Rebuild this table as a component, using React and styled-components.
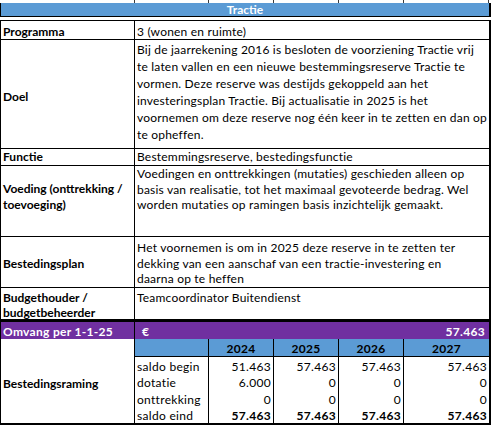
import React from "react";
import styled, { createGlobalStyle } from "styled-components";

const BLUE = "#5b9bd5";
const PURPLE = "#7030a0";
const COLS = "134px 74px 65px 65px 65px 85px";

const GlobalStyle = createGlobalStyle`
  *, *::before, *::after { box-sizing: border-box; }
  html, body { margin: 0; padding: 0; background: #fff; }
  body {
    font-family: Lato, "Liberation Sans", sans-serif;
    font-size: 12px;
    color: #000;
  }
`;

const Sheet = styled.div`
  width: 491px;
`;

const TopStrip = styled.div`
  display: grid;
  grid-template-columns: ${COLS};
  height: 3px;
  padding-left: 1px;
`;

const StripCell = styled.div`
  border-right: 1px solid #3a3a3a;
`;

const Title = styled.div`
  height: 14px;
  line-height: 13px;
  background: ${BLUE};
  color: #fff;
  font-weight: 700;
  text-align: center;
  border-bottom: 1px solid #000;
  border-left: 1px solid #000;
  border-right: 2px solid #000;
  margin-bottom: 3px;
`;

const Body = styled.div`
  border: 1px solid #000;
  border-right-width: 2px;
  border-bottom-width: 2px;
`;

const InfoRow = styled.div`
  display: grid;
  grid-template-columns: 134px 1fr;
  height: ${(p) => p.$h}px;
  line-height: ${(p) => p.$lh}px;
  border-bottom: ${(p) => (p.$thick ? 3 : 1)}px solid #000;
`;

const Label = styled.div`
  padding: ${(p) => p.$pad}px 2px 0;
  border-right: 1px solid #000;
  font-weight: 700;
  white-space: pre;
  overflow: hidden;
`;

const Value = styled.div`
  padding: ${(p) => p.$pad}px 2px 0;
  white-space: pre;
  overflow: hidden;
  letter-spacing: 0.2px;
`;

const TotalRow = styled.div`
  display: grid;
  grid-template-columns: 134px 1fr;
  height: 17px;
  line-height: 15px;
  background: ${PURPLE};
  color: #fff;
  font-weight: 700;
`;

const TotalLabel = styled.div`
  padding: 2px 2px 0;
  border-right: 1px solid #000;
  letter-spacing: 0.3px;
`;

const TotalValue = styled.div`
  display: flex;
  justify-content: space-between;
  padding: 2px 4px 0 7px;
  letter-spacing: 0.3px;
`;

const Raming = styled.div`
  display: grid;
  grid-template-columns: ${COLS};
  grid-template-rows: 18px repeat(4, 16.5px);
`;

const RamingLabel = styled.div`
  grid-row: 1 / -1;
  padding: 37px 2px 0;
  line-height: 15px;
  border-right: 1px solid #000;
  font-weight: 700;
`;

const YearCell = styled.div`
  background: ${BLUE};
  border-bottom: 1px solid #000;
  border-right: ${(p) => (p.$last ? 0 : 1)}px solid #000;
  line-height: 15px;
  padding-top: 2px;
  text-align: center;
  font-weight: 700;
  letter-spacing: 0.3px;
`;

const DataCell = styled.div`
  display: flex;
  align-items: flex-end;
  justify-content: ${(p) => (p.$text ? "flex-start" : "flex-end")};
  padding: 0 2px;
  line-height: 15px;
  border-right: ${(p) => (p.$last ? 0 : 1)}px solid #000;
  font-weight: ${(p) => (p.$bold ? 700 : 400)};
  letter-spacing: 0.3px;
  white-space: pre;
`;

const info = [
  { label: "Programma", value: "3 (wonen en ruimte)", h: 19, lh: 15, lp: 3, vp: 3 },
  {
    label: "Doel",
    value:
      "Bij de jaarrekening 2016 is besloten de voorziening Tractie vrij\nte laten vallen en een nieuwe bestemmingsreserve Tractie te\nvormen. Deze reserve was destijds gekoppeld aan het\ninvesteringsplan Tractie. Bij actualisatie in 2025 is het\nvoornemen om deze reserve nog één keer in te zetten en dan op\nte opheffen.",
    h: 109,
    lh: 17,
    lp: 48,
    vp: 1,
  },
  { label: "Functie", value: "Bestemmingsreserve, bestedingsfunctie", h: 17, lh: 16, lp: 0, vp: 0 },
  {
    label: "Voeding (onttrekking /\ntoevoeging)",
    value:
      "Voedingen en onttrekkingen (mutaties) geschieden alleen op\nbasis van realisatie, tot het maximaal gevoteerde bedrag. Wel\nworden mutaties op ramingen basis inzichtelijk gemaakt.",
    h: 71,
    lh: 15.5,
    lp: 15,
    vp: 0,
  },
  {
    label: "Bestedingsplan",
    value:
      "Het voornemen is om in 2025 deze reserve in te zetten ter\ndekking van een aanschaf van een tractie-investering en\ndaarna op te heffen",
    h: 51,
    lh: 15.5,
    lp: 19,
    vp: 3,
  },
  {
    label: "Budgethouder /\nbudgetbeheerder",
    value: "Teamcoordinator Buitendienst",
    h: 34,
    lh: 15,
    lp: 2,
    vp: 2,
    thick: true,
  },
];

const years = ["2024", "2025", "2026", "2027"];

const raming = [
  { name: "saldo begin", vals: ["51.463", "57.463", "57.463", "57.463"] },
  { name: "dotatie", vals: ["6.000", "0", "0", "0"] },
  { name: "onttrekking", vals: ["0", "0", "0", "0"] },
  { name: "saldo eind", vals: ["57.463", "57.463", "57.463", "57.463"], bold: true },
];

export default function App() {
  return (
    <Sheet>
      <GlobalStyle />
      <TopStrip>
        {[0, 1, 2, 3, 4, 5].map((i) => (
          <StripCell key={i} />
        ))}
      </TopStrip>
      <Title>Tractie</Title>
      <Body>
        {info.map((r) => (
          <InfoRow key={r.label} $h={r.h} $lh={r.lh} $thick={r.thick}>
            <Label $pad={r.lp}>{r.label}</Label>
            <Value $pad={r.vp}>{r.value}</Value>
          </InfoRow>
        ))}
        <TotalRow>
          <TotalLabel>Omvang per 1-1-25</TotalLabel>
          <TotalValue>
            <span>€</span>
            <span>57.463</span>
          </TotalValue>
        </TotalRow>
        <Raming>
          <RamingLabel>Bestedingsraming</RamingLabel>
          <YearCell />
          {years.map((y, i) => (
            <YearCell key={y} $last={i === years.length - 1}>
              {y}
            </YearCell>
          ))}
          {raming.map((row) => (
            <React.Fragment key={row.name}>
              <DataCell $text>{row.name}</DataCell>
              {row.vals.map((v, i) => (
                <DataCell key={i} $bold={row.bold} $last={i === row.vals.length - 1}>
                  {v}
                </DataCell>
              ))}
            </React.Fragment>
          ))}
        </Raming>
      </Body>
    </Sheet>
  );
}
